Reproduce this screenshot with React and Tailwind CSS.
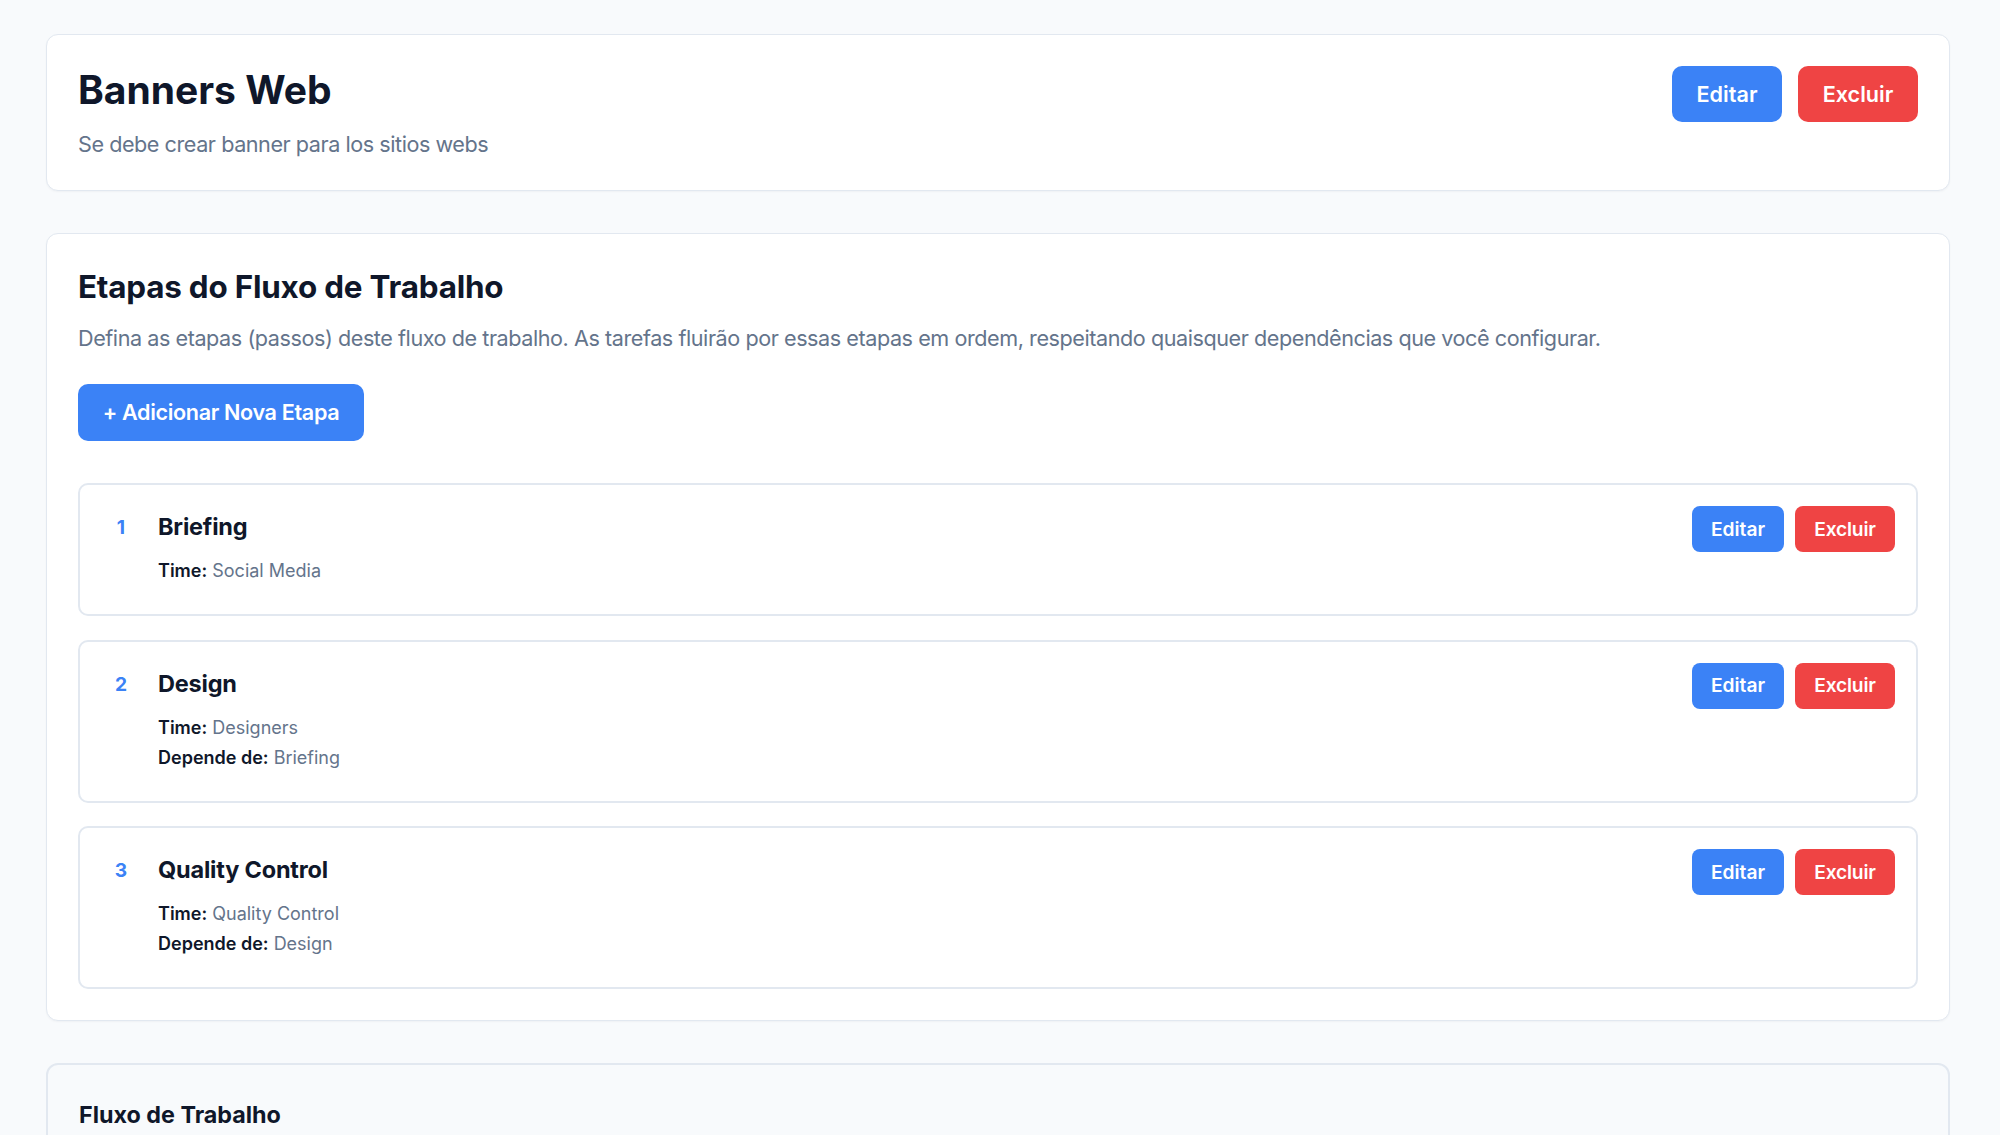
import React from "react";

const steps = [
  { n: 1, title: "Briefing", team: "Social Media", dep: null },
  { n: 2, title: "Design", team: "Designers", dep: "Briefing" },
  { n: 3, title: "Quality Control", team: "Quality Control", dep: "Design" },
];

function StepCard({ step }) {
  return (
    <div className="flex items-start justify-between rounded-[10px] border-2 border-[#e2e8f0] bg-white px-[21px] pt-[21px] pb-[28px]">
      <div className="flex items-start gap-[17px]">
        <div className="w-[40px] text-center text-[19.2px] leading-[42px] font-bold text-[#3b82f6]">
          {step.n}
        </div>
        <div className="flex flex-col">
          <div className="text-[23.5px] leading-[42px] font-bold tracking-[-0.2px] text-[#0f172a]">{step.title}</div>
          <div className="mt-[8px] text-[18px] leading-[30px] text-[#64748b]">
            <span className="font-semibold text-[#0f172a]">Time:</span> {step.team}
          </div>
          {step.dep && (
            <div className="text-[18px] leading-[30px] text-[#64748b]">
              <span className="font-semibold text-[#0f172a]">Depende de:</span> {step.dep}
            </div>
          )}
        </div>
      </div>
      <div className="flex gap-[11px]">
        <button className="flex h-[46px] w-[92px] items-center justify-center rounded-[8px] bg-[#3b82f6] text-[19.2px] font-semibold text-white">
          Editar
        </button>
        <button className="flex h-[46px] w-[100px] items-center justify-center rounded-[8px] bg-[#ef4444] text-[19.2px] font-semibold tracking-[-0.2px] text-white">
          Excluir
        </button>
      </div>
    </div>
  );
}

export default function App() {
  return (
    <div className="h-[1135px] overflow-hidden bg-[#f8fafc] pl-[46px] pr-[50px] pt-[34px] font-['Inter',sans-serif]">
      <div className="flex flex-col gap-[42px]">
        {/* Header card */}
        <div className="flex items-start justify-between rounded-[12px] border border-[#e2e8f0] bg-white p-[31px] shadow-[0_1px_2px_rgba(15,23,42,0.04)]">
          <div className="flex flex-col">
            <h1 className="text-[39px] leading-[48px] font-bold text-[#0f172a]">Banners Web</h1>
            <p className="mt-[15px] text-[21.6px] leading-[30px] tracking-[-0.45px] text-[#64748b]">
              Se debe crear banner para los sitios webs
            </p>
          </div>
          <div className="flex gap-[16px]">
            <button className="flex h-[56px] w-[110px] items-center justify-center rounded-[10px] bg-[#3b82f6] text-[21.6px] font-semibold text-white">
              Editar
            </button>
            <button className="flex h-[56px] w-[120px] items-center justify-center rounded-[10px] bg-[#ef4444] text-[21.6px] font-semibold text-white">
              Excluir
            </button>
          </div>
        </div>

        {/* Steps card */}
        <div className="flex flex-col rounded-[12px] border border-[#e2e8f0] bg-white p-[31px] shadow-[0_1px_2px_rgba(15,23,42,0.04)]">
          <h2 className="text-[31.4px] leading-[44px] font-bold tracking-[-0.2px] text-[#0f172a]">Etapas do Fluxo de Trabalho</h2>
          <p className="mt-[13px] text-[21.6px] leading-[32px] tracking-[-0.44px] text-[#64748b]">
            Defina as etapas (passos) deste fluxo de trabalho. As tarefas fluirão por essas etapas em ordem, respeitando quaisquer dependências que você configurar.
          </p>
          <div className="mt-[30px]">
            <button className="flex h-[57px] w-[286px] items-center justify-center rounded-[10px] bg-[#3b82f6] text-[21.6px] font-semibold tracking-[-0.35px] text-white">
              + Adicionar Nova Etapa
            </button>
          </div>
          <div className="mt-[42px] flex flex-col gap-[23.5px]">
            {steps.map((s) => (
              <StepCard key={s.n} step={s} />
            ))}
          </div>
        </div>

        {/* Workflow card */}
        <div className="h-[300px] rounded-[12px] border-2 border-[#e2e8f0] bg-[#f8fafc] px-[31px] pt-[32px]">
          <h3 className="text-[23.3px] leading-[36px] font-bold text-[#0f172a]">Fluxo de Trabalho</h3>
        </div>
      </div>
    </div>
  );
}
